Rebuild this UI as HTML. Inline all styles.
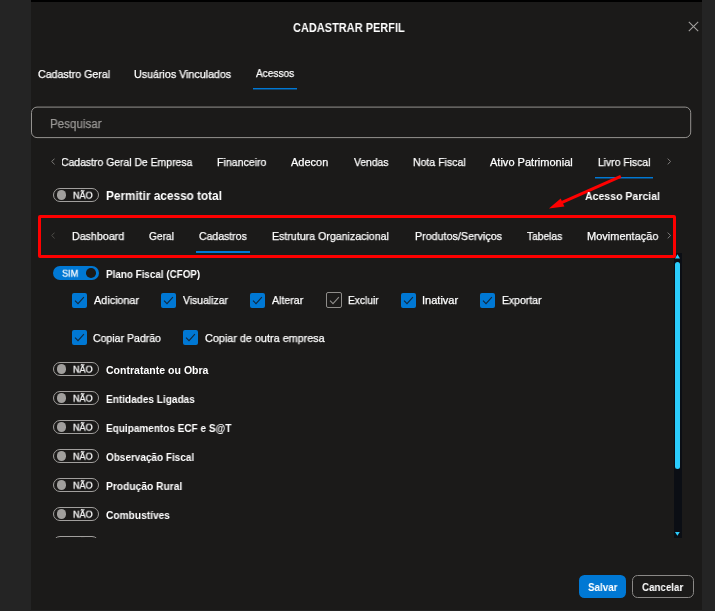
<!DOCTYPE html>
<html lang="pt-BR">
<head>
<meta charset="utf-8">
<title>Cadastrar Perfil</title>
<style>
*{box-sizing:border-box;margin:0;padding:0}
html,body{width:715px;height:611px;overflow:hidden;background:#242424;font-family:"Liberation Sans",sans-serif;color:#f3f2f1}
#modal{position:absolute;left:31px;top:0;width:671px;height:610px;background:#1b1a19;overflow:hidden}
#topbar{position:absolute;left:0;top:0;width:671px;height:2px;background:#000}
.abs{position:absolute}
.t{position:absolute;white-space:nowrap;line-height:20px;transform-origin:0 50%;color:#fff;will-change:transform;-webkit-text-stroke:0.25px}
.ul{position:absolute;height:2px;background:#0078d4}
.ul.h{background:linear-gradient(#0078d4 50%,rgba(0,120,212,.45) 50%)}
.sw{position:absolute;width:46px;height:14px;border-radius:7px}
.sw.off{border:1px solid #a19f9d}
.sw.off i{position:absolute;left:2.7px;top:1.4px;width:9.3px;height:9.3px;border-radius:50%;background:#a19f9d}
.sw.on{background:#0078d4}
.sw.on i{position:absolute;right:3.2px;top:2.2px;width:9.7px;height:9.7px;border-radius:50%;background:#1b1a19}
.cb{position:absolute;width:15px;height:15px;border-radius:2px;background:#0078d4}
.cb.un{background:transparent;border:1px solid #8f8d8a;width:16px;height:16px}
.cb svg{position:absolute;left:0;top:0;width:15px;height:15px}
.cb.un svg{left:-0.2px;top:0px}
.btn{position:absolute;top:575px;height:23px;border-radius:5.5px}
</style>
</head>
<body>
<div id="modal">
<div id="topbar"></div>
<svg class="abs" style="left:657px;top:21px" width="11" height="11" viewBox="0 0 11 11"><path d="M0.8 0.8 L10.2 10.2 M10.2 0.8 L0.8 10.2" stroke="#a19f9d" stroke-width="1.1" fill="none"/></svg>
<div class="ul h" style="left:221.5px;top:88px;width:44.5px"></div>
<svg class="abs" style="left:0;top:100px" width="671" height="45" viewBox="0 0 671 45"><rect x="0.5" y="7.1" width="659.2" height="30.5" rx="5.5" ry="5.5" fill="none" stroke="#94928f" stroke-width="1"/></svg>
<div class="ul h" style="left:564px;top:177px;width:58px"></div>
<div class="ul" style="left:165px;top:251px;width:54px"></div>
<svg class="abs" style="left:19.55px;top:158.00px" width="4.3" height="7" viewBox="0 0 4.3 7"><path d="M3.6 0.6 L0.7 3.5 L3.6 6.4" stroke="#8a8886" stroke-width="0.9" fill="none"/></svg><svg class="abs" style="left:635.85px;top:158.30px" width="4.3" height="7" viewBox="0 0 4.3 7"><path d="M0.7 0.6 L3.6 3.5 L0.7 6.4" stroke="#8a8886" stroke-width="0.9" fill="none"/></svg><svg class="abs" style="left:19.85px;top:232.30px" width="4.3" height="7" viewBox="0 0 4.3 7"><path d="M3.6 0.6 L0.7 3.5 L3.6 6.4" stroke="#55534f" stroke-width="0.9" fill="none"/></svg><svg class="abs" style="left:635.85px;top:232.40px" width="4.3" height="7" viewBox="0 0 4.3 7"><path d="M0.7 0.6 L3.6 3.5 L0.7 6.4" stroke="#8a8886" stroke-width="0.9" fill="none"/></svg>
<!-- scrollbar -->
<div class="abs" style="left:643px;top:253px;width:8px;height:284.5px;background:#0b0e14"></div>
<div class="abs" style="left:644px;top:261.8px;width:5px;height:207.2px;background:#2bcdfd;border-radius:2.5px"></div>
<svg class="abs" style="left:644.4px;top:254.3px" width="5" height="4.5" viewBox="0 0 4.6 4.2"><path d="M0 4.2 L2.3 0.2 L4.6 4.2 Z" fill="#2bcdfd"/></svg>
<svg class="abs" style="left:644.2px;top:532.3px" width="4.8" height="3.7" viewBox="0 0 4.8 3.7"><path d="M0 0 L2.4 3.7 L4.8 0 Z" fill="#2bcdfd"/></svg>
<!-- red annotation -->
<div class="abs" style="left:7px;top:215px;width:638px;height:43px;border:3px solid #fe0000;border-radius:2px"></div>
<svg class="abs" style="left:510px;top:170px" width="90" height="45" viewBox="541 170 90 45"><path d="M620.8 176.4 L561.5 202.6" stroke="#fe0000" stroke-width="3" fill="none"/><path d="M548.9 208.5 L560.7 198.5 L564.4 206.6 Z" fill="#fe0000"/></svg>
<div class="sw on" style="left:22px;top:266px"><i></i></div>
<div class="sw off" style="left:22px;top:188.00px"><i></i></div><div class="sw off" style="left:22px;top:362.00px"><i></i></div><div class="sw off" style="left:22px;top:391.00px"><i></i></div><div class="sw off" style="left:22px;top:420.00px"><i></i></div><div class="sw off" style="left:22px;top:449.00px"><i></i></div><div class="sw off" style="left:22px;top:478.00px"><i></i></div><div class="sw off" style="left:22px;top:507.00px"><i></i></div><div class="sw off" style="left:22px;top:536.00px"><i></i></div>
<div class="cb" style="left:41px;top:293px"><svg viewBox="0 0 15 15"><path d="M3 7.7 L6 10.6 L11.9 4.2" stroke="#10293f" stroke-width="1.1" fill="none"/></svg></div><div class="cb" style="left:130px;top:293px"><svg viewBox="0 0 15 15"><path d="M3 7.7 L6 10.6 L11.9 4.2" stroke="#10293f" stroke-width="1.1" fill="none"/></svg></div><div class="cb" style="left:219px;top:293px"><svg viewBox="0 0 15 15"><path d="M3 7.7 L6 10.6 L11.9 4.2" stroke="#10293f" stroke-width="1.1" fill="none"/></svg></div><div class="cb un" style="left:295px;top:292.4px"><svg viewBox="0 0 15 15"><path d="M3 7.7 L6 10.6 L11.9 4.2" stroke="#8f8d8a" stroke-width="1.1" fill="none"/></svg></div><div class="cb" style="left:370.3px;top:293px"><svg viewBox="0 0 15 15"><path d="M3 7.7 L6 10.6 L11.9 4.2" stroke="#10293f" stroke-width="1.1" fill="none"/></svg></div><div class="cb" style="left:449px;top:293px"><svg viewBox="0 0 15 15"><path d="M3 7.7 L6 10.6 L11.9 4.2" stroke="#10293f" stroke-width="1.1" fill="none"/></svg></div><div class="cb" style="left:41px;top:330.2px"><svg viewBox="0 0 15 15"><path d="M3 7.7 L6 10.6 L11.9 4.2" stroke="#10293f" stroke-width="1.1" fill="none"/></svg></div><div class="cb" style="left:152.2px;top:330.2px"><svg viewBox="0 0 15 15"><path d="M3 7.7 L6 10.6 L11.9 4.2" stroke="#10293f" stroke-width="1.1" fill="none"/></svg></div>
<div class="btn" style="left:548px;width:47px;background:#0078d4"></div>
<div class="btn" style="left:601px;width:62px;border:1px solid #8a8886"></div>
<div class="t" style="left:261.70px;top:18.00px;font-size:12.5px;transform:scaleX(0.8787);font-weight:bold;-webkit-text-stroke:0">CADASTRAR PERFIL</div>
<div class="t" style="left:6.80px;top:64.00px;font-size:11px;transform:scaleX(0.9662)">Cadastro Geral</div>
<div class="t" style="left:102.80px;top:64.00px;font-size:11px;transform:scaleX(0.9710)">Usuários Vinculados</div>
<div class="t" style="left:225.00px;top:63.00px;font-size:11px;transform:scaleX(0.9195)">Acessos</div>
<div class="t" style="left:18.97px;top:114.00px;font-size:12.5px;transform:scaleX(0.9273);color:#999795">Pesquisar</div>
<div style="position:absolute;left:30.7px;top:0;width:400px;height:610px;overflow:hidden"><div class="t" style="left:-1.00px;top:152.00px;font-size:11px;transform:scaleX(0.9460)">Cadastro Geral De Empresa</div></div>
<div class="t" style="left:185.70px;top:152.00px;font-size:11px;transform:scaleX(0.9627)">Financeiro</div>
<div class="t" style="left:260.00px;top:152.00px;font-size:11px;transform:scaleX(0.9973)">Adecon</div>
<div class="t" style="left:323.00px;top:152.00px;font-size:11px;transform:scaleX(0.9378)">Vendas</div>
<div class="t" style="left:382.20px;top:152.00px;font-size:11px;transform:scaleX(0.9564)">Nota Fiscal</div>
<div class="t" style="left:459.30px;top:152.00px;font-size:11px;transform:scaleX(1.0024)">Ativo Patrimonial</div>
<div class="t" style="left:566.80px;top:152.00px;font-size:11px;transform:scaleX(0.9418)">Livro Fiscal</div>
<div class="t" style="left:75.02px;top:186.00px;font-size:12px;transform:scaleX(0.9819);font-weight:bold;-webkit-text-stroke:0">Permitir acesso total</div>
<div class="t" style="left:554.30px;top:186.00px;font-size:11.5px;transform:scaleX(0.9160);font-weight:bold;-webkit-text-stroke:0">Acesso Parcial</div>
<div class="t" style="left:40.90px;top:226.00px;font-size:11px;transform:scaleX(0.9685)">Dashboard</div>
<div class="t" style="left:118.20px;top:226.00px;font-size:11px;transform:scaleX(0.9259)">Geral</div>
<div class="t" style="left:168.20px;top:226.00px;font-size:11px;transform:scaleX(0.9520)">Cadastros</div>
<div class="t" style="left:241.40px;top:226.00px;font-size:11px;transform:scaleX(0.9653)">Estrutura Organizacional</div>
<div class="t" style="left:384.00px;top:226.00px;font-size:11px;transform:scaleX(0.9742)">Produtos/Serviços</div>
<div class="t" style="left:496.40px;top:226.00px;font-size:11px;transform:scaleX(0.9289)">Tabelas</div>
<div class="t" style="left:556.40px;top:226.00px;font-size:11px;transform:scaleX(0.9972)">Movimentação</div>
<div class="t" style="left:75.20px;top:264.00px;font-size:10.5px;transform:scaleX(0.9390);font-weight:bold;-webkit-text-stroke:0">Plano Fiscal (CFOP)</div>
<div class="t" style="left:31.30px;top:264.00px;font-size:10px;transform:scale(0.9118,0.875)">SIM</div>
<div class="t" style="left:62.80px;top:290.00px;font-size:11px;transform:scaleX(0.9826)">Adicionar</div>
<div class="t" style="left:152.00px;top:290.00px;font-size:11px;transform:scaleX(0.9458)">Visualizar</div>
<div class="t" style="left:241.00px;top:290.00px;font-size:11px;transform:scaleX(0.9636)">Alterar</div>
<div class="t" style="left:317.00px;top:290.00px;font-size:11px;transform:scaleX(0.9273)">Excluir</div>
<div class="t" style="left:390.80px;top:290.00px;font-size:11px;transform:scaleX(1.0029)">Inativar</div>
<div class="t" style="left:471.10px;top:290.00px;font-size:11px;transform:scaleX(0.9500)">Exportar</div>
<div class="t" style="left:62.00px;top:328.00px;font-size:11px;transform:scaleX(0.9577)">Copiar Padrão</div>
<div class="t" style="left:174.30px;top:328.00px;font-size:11px;transform:scaleX(0.9836)">Copiar de outra empresa</div>
<div class="t" style="left:75.10px;top:360.00px;font-size:10.5px;transform:scaleX(1.0039);font-weight:bold;-webkit-text-stroke:0">Contratante ou Obra</div>
<div class="t" style="left:75.10px;top:389.00px;font-size:10.5px;transform:scaleX(0.9570);font-weight:bold;-webkit-text-stroke:0">Entidades Ligadas</div>
<div class="t" style="left:75.10px;top:418.00px;font-size:10.5px;transform:scaleX(0.9523);font-weight:bold;-webkit-text-stroke:0">Equipamentos ECF e S@T</div>
<div class="t" style="left:75.10px;top:447.00px;font-size:10.5px;transform:scaleX(0.9500);font-weight:bold;-webkit-text-stroke:0">Observação Fiscal</div>
<div class="t" style="left:75.10px;top:476.00px;font-size:10.5px;transform:scaleX(0.9756);font-weight:bold;-webkit-text-stroke:0">Produção Rural</div>
<div class="t" style="left:75.10px;top:505.00px;font-size:10.5px;transform:scaleX(0.9697);font-weight:bold;-webkit-text-stroke:0">Combustíves</div>
<div class="t" style="left:42.40px;top:186.00px;font-size:10px;transform:scale(0.9000,0.875)">NÃO</div>
<div class="t" style="left:42.40px;top:360.00px;font-size:10px;transform:scale(0.9000,0.875)">NÃO</div>
<div class="t" style="left:42.40px;top:389.00px;font-size:10px;transform:scale(0.9000,0.875)">NÃO</div>
<div class="t" style="left:42.40px;top:418.00px;font-size:10px;transform:scale(0.9000,0.875)">NÃO</div>
<div class="t" style="left:42.40px;top:447.00px;font-size:10px;transform:scale(0.9000,0.875)">NÃO</div>
<div class="t" style="left:42.40px;top:476.00px;font-size:10px;transform:scale(0.9000,0.875)">NÃO</div>
<div class="t" style="left:42.40px;top:505.00px;font-size:10px;transform:scale(0.9000,0.875)">NÃO</div>
<div class="t" style="left:42.40px;top:534.00px;font-size:10px;transform:scale(0.9000,0.875)">NÃO</div>
<div class="t" style="left:557.20px;top:577.00px;font-size:11px;transform:scaleX(0.8909);font-weight:bold;-webkit-text-stroke:0">Salvar</div>
<div class="t" style="left:610.90px;top:577.00px;font-size:11px;transform:scaleX(0.8872);font-weight:bold;-webkit-text-stroke:0">Cancelar</div>
<div class="abs" style="left:0;top:537.6px;width:660px;height:30px;background:#1b1a19;will-change:transform"></div>
</div>
</body>
</html>
